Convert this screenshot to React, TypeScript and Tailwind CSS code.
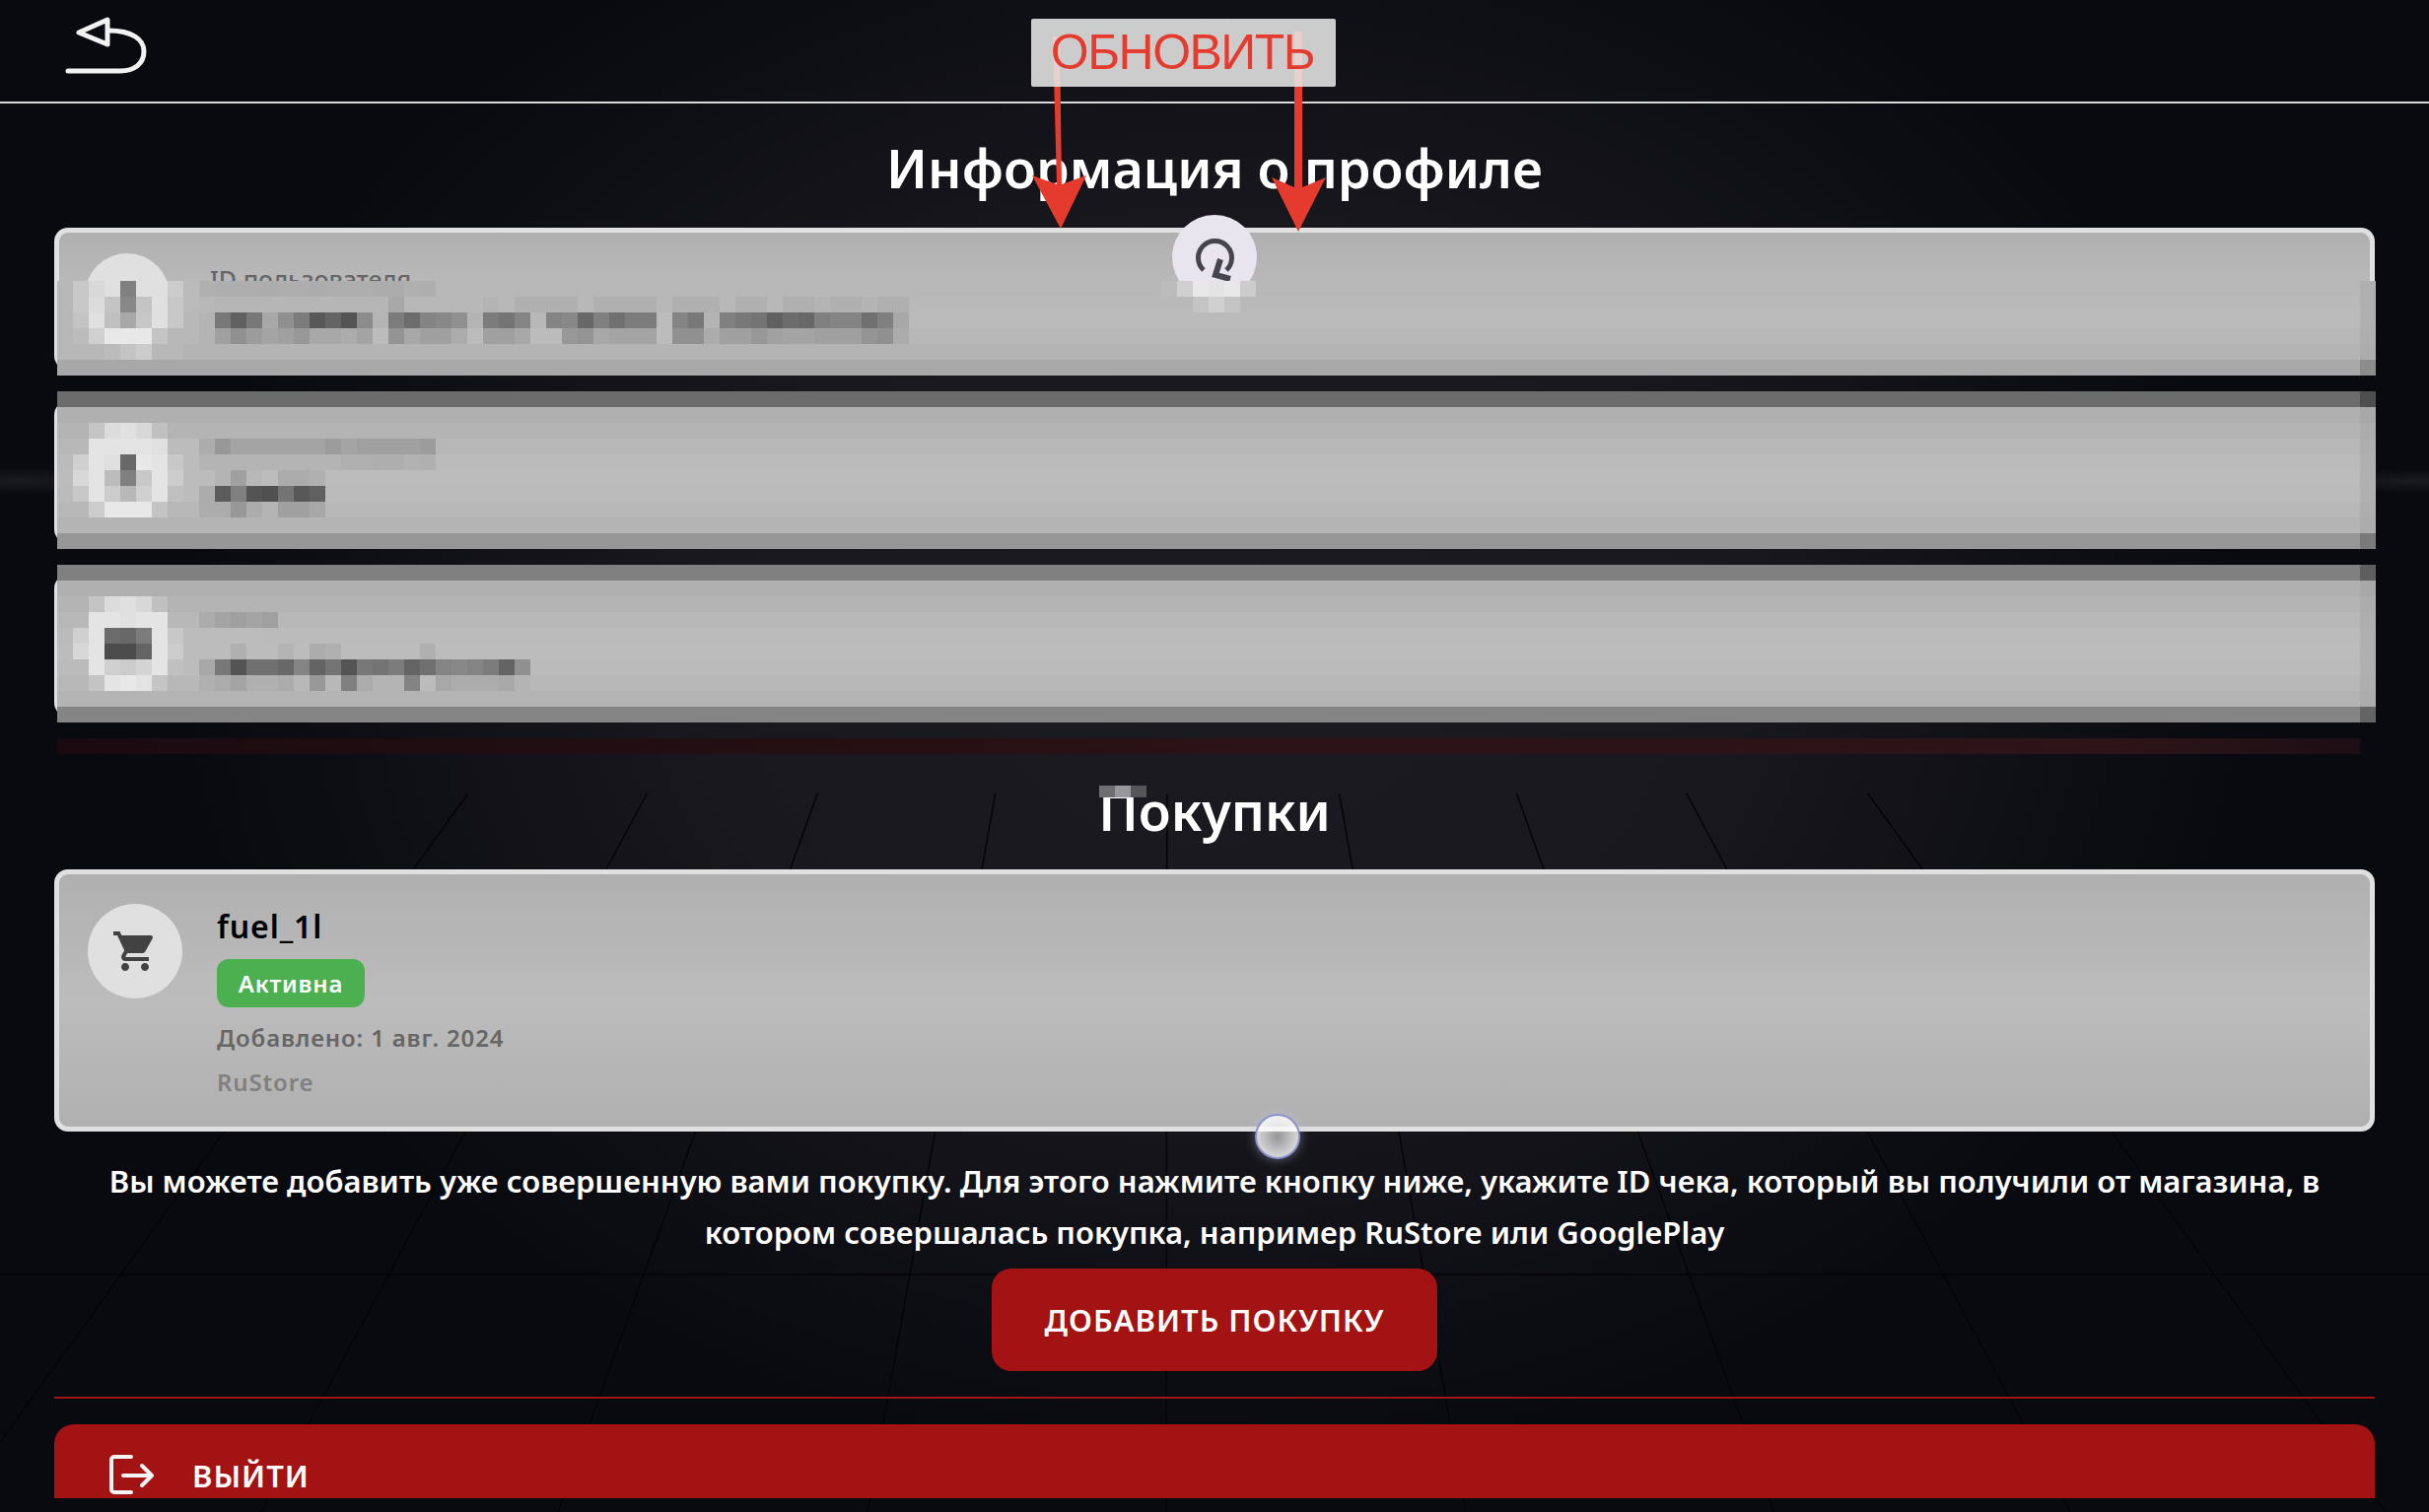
import { MdShoppingCart } from "react-icons/md";

// pixelated privacy overlay, grid of 16px cells starting at x=58 y=285
const bands: [number, string][] = [
  [0, "b8"], [1, "b9"], [2, "bb"], [3, "b8"], [4, "b4"], [5, "a8"],
  [7, "6c"], [8, "b0"], [9, "b4"], [10, "b8"], [11, "bb"], [12, "bc"], [13, "bb"], [14, "b8"], [15, "b4"], [16, "96"],
  [18, "80"], [19, "b0"], [20, "b4"], [21, "b8"], [22, "bb"], [23, "bc"], [24, "bb"], [25, "b8"], [26, "b4"], [27, "85"],
];

const edgeColumn: [number, string][] = [
  [0, "b0"], [1, "b0"], [2, "b0"], [3, "ae"], [4, "ac"], [5, "8c"],
  [7, "4e"], [8, "a8"], [9, "ac"], [10, "ae"], [11, "b0"], [12, "b0"], [13, "b0"], [14, "ae"], [15, "ac"], [16, "7a"],
  [18, "5e"], [19, "a8"], [20, "ac"], [21, "ae"], [22, "b0"], [23, "b0"], [24, "b0"], [25, "ae"], [26, "ac"], [27, "64"],
];

const cells: [number, number, string][] = [
  // id row
  [0, 0, "b8 c8 d8 e0 80 e0 e0 cc ba b0 ae ae ae ac ae ae ac ae ae ae ac ac b0 ae"],
  [1, 0, "b8 c8 dc c4 88 c4 e0 c8 ba b8 b6 b6 b6 b6 b6 b6 b6 b6 b6 b6 b6 a8 b8 b8 b8 b8 b8 b4 b8 b0 b0 b0 b0 b8 b0 b0 b0 b0 b8 b0 b0 b0 b8 b0 b0 b8 b0 b0 b4 b0 b0 b4 b0 b0"],
  [2, 0, "b8 c4 e0 c0 a8 c8 e0 c8 b8 b4 78 60 78 a8 90 7c 58 64 54 8c b4 7c 6c 84 88 90 b4 7c 74 84 b8 84 88 68 80 70 7c 7c bc 84 78 b4 80 78 74 60 6c 68 80 84 84 70 80 a8"],
  [3, 0, "b8 bc d0 e8 e8 e8 c4 b8 b8 b4 a0 90 9c a4 a0 98 a8 a8 ac a4 bc 94 a8 a0 a0 ac bc a0 a0 a8 bc bc 98 94 a8 a4 a4 a4 bc 90 90 ac a0 a0 98 a0 a4 a4 a0 a0 a0 94 90 ac"],
  [4, 0, "b8 b8 b8 bc c4 cc b8 b8"],
  // name row
  [9, 2, "c4 dc e0 d8 c0"],
  [10, 2, "e4 e4 e4 e4 e0 bc bc ac 98 a4 a4 a4 a4 a4 a4 9c a4 a0 a0 a0 a0 9c"],
  [11, 1, "d0 e4 e0 68 e8 e4 c8 bc b4 b4 b4 b4 b4 b4 b4 b4 b4 b0 b0 ae ae b2 b0"],
  [12, 1, "d8 e4 bc 80 c8 e4 cc bc bc b4 a0 b8 bc ac ac b0"],
  [13, 1, "c8 e4 cc b8 d0 e4 c0 bc ac 5c 80 54 50 74 58 60"],
  [14, 2, "cc e8 e8 e8 c4 b8 b8 ac ac 98 ac b4 a0 a0 a8"],
  // email row
  [20, 2, "c4 dc e0 d8 c0"],
  [21, 2, "e4 e4 e0 e4 e4 b8 b8 ac a4 a0 a4 a0"],
  [22, 1, "d0 e4 6c 68 7c e4 c8 bc bc bc bc bc"],
  [23, 1, "d8 e4 4c 4c 64 e4 cc bc bc bc b0 bc bc b4 bc ac b0 bc bc bc bc bc b0"],
  [24, 2, "e4 d0 cc d4 e4 c0 bc a8 78 54 70 70 68 84 64 74 54 78 74 7c 64 70 84 88 84 7c 64 90"],
  [25, 2, "c4 e4 e8 e4 c4 b8 b8 b0 ac a4 b0 b0 ac b8 98 b8 80 ac b4 b4 84 bc a8 ac ac ac a8 b4"],
  // refresh button, what shows of it under the mosaic
  [0, 70, "bc d0 e8 e4 e8 cc"],
  [1, 72, "c4 d0 c4"],
];

function Mosaic() {
  return (
    <svg
      className="absolute left-[58px] top-[285px]"
      width={2352}
      height={480}
      viewBox="0 0 2352 480"
      shapeRendering="crispEdges"
    >
      <defs>
        <linearGradient id="redStrip">
          <stop offset="0" stopColor="#1a0a0f" />
          <stop offset="0.5" stopColor="#2a1216" />
          <stop offset="0.9" stopColor="#2c1418" />
          <stop offset="1" stopColor="#1c0e14" />
        </linearGradient>
      </defs>
      {bands.map(([row, g]) => (
        <rect key={row} x={0} y={row * 16} width={2336} height={16} fill={`#${g}${g}${g}`} />
      ))}
      {edgeColumn.map(([row, g]) => (
        <rect key={row} x={2336} y={row * 16} width={16} height={16} fill={`#${g}${g}${g}`} />
      ))}
      {cells.map(([row, col, list]) =>
        list.split(" ").map((g, i) => (
          <rect key={`${row}-${col}-${i}`} x={(col + i) * 16} y={row * 16} width={16} height={16} fill={`#${g}${g}${g}`} />
        )),
      )}
      <rect x={0} y={464} width={2336} height={16} fill="url(#redStrip)" />
    </svg>
  );
}

// floor tiles of the wallpaper
const floorBottoms = [-51, 265, 566, 880, 1183, 1487, 1800, 2100, 2420];

function Wallpaper() {
  return (
    <svg className="absolute inset-0" width={2464} height={1534} viewBox="0 0 2464 1534">
      <defs>
        <radialGradient id="streak">
          <stop offset="0" stopColor="#ffffff" stopOpacity="0.07" />
          <stop offset="1" stopColor="#ffffff" stopOpacity="0" />
        </radialGradient>
      </defs>
      <ellipse cx="20" cy="488" rx="110" ry="14" fill="url(#streak)" />
      <ellipse cx="2450" cy="488" rx="110" ry="12" fill="url(#streak)" />
      {floorBottoms.map((bx) => {
        const t = (805 + 180) / (1534 + 180);
        return (
          <line
            key={bx}
            x1={1185 + (bx - 1185) * t}
            y1={805}
            x2={bx}
            y2={1534}
            stroke="#050507"
            strokeWidth={1.5}
          />
        );
      })}
      <line x1="0" y1="1293" x2="2464" y2="1293" stroke="#050507" strokeWidth={1.5} />
    </svg>
  );
}

function Annotation() {
  return (
    <>
      <svg className="absolute left-0 top-0" width={1400} height={240} viewBox="0 0 1400 240">
        <polygon fill="#e53b2f" points="1068,37 1075,37 1077,187 1102,178 1076,232 1047,178 1072,187" />
        <polygon fill="#e53b2f" points="1313,32 1321,32 1321,190 1345,180 1317,235 1290,180 1313,190" />
      </svg>
      <div className="absolute left-[1046px] top-[19px] flex h-[69px] w-[309px] items-center justify-center rounded-[2px] bg-[rgba(230,230,230,0.88)] pr-[2px] font-['Liberation_Sans',sans-serif] text-[50px] tracking-[-1.5px] text-[#e53b2f]">
        ОБНОВИТЬ
      </div>
    </>
  );
}

function ProfileCard({ label }: { label?: string }) {
  return (
    <div className="flex h-[144px] gap-[41px] rounded-[14px] border-[5px] border-b-0 border-[#e0e0e0] bg-gradient-to-b from-[#b0b0b0] via-[#bcbcbc] to-[#b0b0b0] pl-[26px] pt-[21px]">
      <div className="h-[86px] w-[86px] rounded-full bg-[#e0e0e0]" />
      {label && <p className="pt-[11px] text-[25px] font-medium leading-[30px] text-[#666666]">{label}</p>}
    </div>
  );
}

export default function App() {
  return (
    <div className="relative h-[1534px] w-[2464px] overflow-hidden bg-[#090a10] bg-[radial-gradient(ellipse_1050px_820px_at_1232px_660px,#1a1a20_0%,#18181e_50%,#090a10_100%)] font-['Noto_Sans',sans-serif] text-white">
      <Wallpaper />

      <div className="relative flex h-[1520px] flex-col overflow-hidden">
        <header className="flex h-[105px] shrink-0 items-start border-b-2 border-[#d8d8d8] pl-[66px] pt-[17px]">
          <svg width={84} height={60} viewBox="0 0 84 60" fill="none" stroke="#f2f2f2" strokeWidth={5}>
            <path d="M14 16 L43 3 V28 Z" strokeLinejoin="round" />
            <path d="M44 14 C68 14 80 23 80 35 C80 48 70 55 56 55 H3" strokeLinecap="round" />
          </svg>
        </header>

        <main className="flex flex-col px-[55px]">
          <h1 className="mt-[25px] h-[101px] text-center text-[54px] font-semibold leading-[80px]">Информация о профиле</h1>

          <div className="flex flex-col gap-[32px]">
            <ProfileCard label="ID пользователя" />
            <ProfileCard />
            <ProfileCard />
          </div>

          <h2 className="mt-[55px] h-[100px] text-center text-[54px] font-semibold leading-[80px]">Покупки</h2>

          <section className="flex h-[266px] shrink-0 gap-[35px] rounded-[14px] border-[5px] border-[#e0e0e0] bg-gradient-to-b from-[#b0b0b0] via-[#bcbcbc] to-[#b0b0b0] pl-[29px] pt-[31px]">
            <div className="-mt-px flex h-[96px] w-[96px] items-center justify-center rounded-full bg-[#e0e0e0] text-[#424242]">
              <MdShoppingCart size={48} />
            </div>
            <div className="flex flex-col items-start">
              <p className="text-[32px] font-semibold leading-[44px] tracking-[0.9px] text-black">fuel_1l</p>
              <span className="mt-[11px] flex h-[49px] w-[150px] items-center justify-center rounded-[12px] bg-[#4caf50] text-[24px] font-semibold tracking-[0.8px] text-white">
                Активна
              </span>
              <p className="mt-[14px] text-[24px] font-semibold leading-[34px] tracking-[0.85px] text-[#666666]">Добавлено: 1 авг. 2024</p>
              <p className="mt-[11px] text-[24px] font-semibold leading-[34px] tracking-[0.85px] text-[#808080]">RuStore</p>
            </div>
          </section>

          <p className="mt-[24px] text-center text-[31px] font-semibold leading-[52px]">
            Вы можете добавить уже совершенную вами покупку. Для этого нажмите кнопку ниже, укажите ID чека, который вы получили от магазина, в
            <br />
            котором совершалась покупка, например RuStore или GooglePlay
          </p>

          <button className="mx-auto mt-[11px] flex h-[104px] w-[452px] shrink-0 items-center justify-center rounded-[20px] bg-[#a31313] text-[31px] font-semibold tracking-[1px] text-white">
            ДОБАВИТЬ ПОКУПКУ
          </button>

          <div className="mt-[26px] h-[2px] shrink-0 bg-[#a31313]" />

          <div className="mt-[26px] flex h-[104px] shrink-0 items-start gap-[38px] rounded-[20px] bg-[#a31313] pl-[56px] pt-[30px]">
            <svg width={46} height={44} viewBox="0 0 46 44" fill="none" stroke="#f4f4f4" strokeWidth={4} strokeLinecap="round" strokeLinejoin="round">
              <path d="M22 3 H5 a3 3 0 0 0 -3 3 V36 a3 3 0 0 0 3 3 H22" />
              <path d="M14 22 H43 M33 12 L43 22 L33 32" />
            </svg>
            <span className="text-[31px] font-semibold leading-[44px] tracking-[1px]">ВЫЙТИ</span>
          </div>
        </main>
      </div>

      <Annotation />

      {/* refresh button sits on the first card */}
      <div className="absolute left-[1189px] top-[218px] h-[86px] w-[86px] rounded-full bg-[#e9e5ee]">
        <svg width={86} height={86} viewBox="0 0 86 86" fill="none" stroke="#45454f" strokeWidth={5}>
          <path d="M32 56 A17 17 0 1 1 55 56" />
          <path d="M49 45 L44 61 L59 65" strokeWidth={6} />
        </svg>
      </div>

      <Mosaic />

      {/* leftover pixels over the second heading */}
      <div className="absolute left-[1115px] top-[797px] flex h-[12px]">
        <div className="w-[16px] bg-[#6e6e72]" />
        <div className="w-[16px] bg-[#98989c]" />
        <div className="w-[16px] bg-[#55555a]" />
      </div>

      {/* touch indicator */}
      <div className="absolute left-[1273px] top-[1130px] h-[46px] w-[46px] rounded-full border-2 border-[#8b93cc] bg-[radial-gradient(circle,rgba(255,255,255,0.55)_0%,rgba(255,255,255,0.95)_100%)] shadow-[0_0_12px_rgba(200,205,235,0.45)]" />
    </div>
  );
}
